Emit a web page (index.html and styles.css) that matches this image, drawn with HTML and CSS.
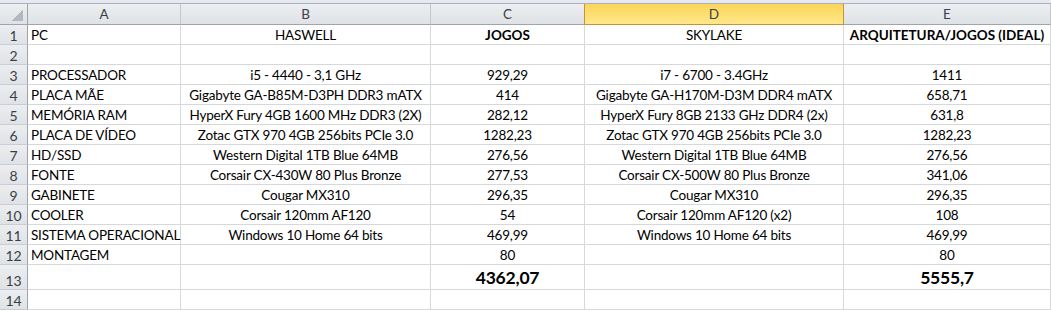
FILE: index.html
```html
<!DOCTYPE html>
<html lang="pt">
<head>
<meta charset="utf-8">
<title>Planilha</title>
<link rel="stylesheet" href="styles.css">
</head>
<body>
<div class="topstrip"></div>
<div class="sheet">
  <div class="hd corner"><span class="tri"></span></div>
  <div class="hd col">A</div>
  <div class="hd col">B</div>
  <div class="hd col">C</div>
  <div class="hd col sel">D</div>
  <div class="hd col">E</div>

  <div class="hd rn">1</div><div class="c l">PC</div><div class="c">HASWELL</div><div class="c b">JOGOS</div><div class="c">SKYLAKE</div><div class="c b">ARQUITETURA/JOGOS (IDEAL)</div>
  <div class="hd rn">2</div><div class="c l"></div><div class="c"></div><div class="c"></div><div class="c"></div><div class="c"></div>
  <div class="hd rn">3</div><div class="c l">PROCESSADOR</div><div class="c">i5 - 4440 - 3,1 GHz</div><div class="c">929,29</div><div class="c">i7 - 6700 - 3.4GHz</div><div class="c">1411</div>
  <div class="hd rn">4</div><div class="c l">PLACA MÃE</div><div class="c">Gigabyte GA-B85M-D3PH DDR3 mATX</div><div class="c">414</div><div class="c">Gigabyte GA-H170M-D3M DDR4 mATX</div><div class="c">658,71</div>
  <div class="hd rn">5</div><div class="c l">MEMÓRIA RAM</div><div class="c">HyperX Fury 4GB 1600 MHz DDR3 (2X)</div><div class="c">282,12</div><div class="c">HyperX Fury 8GB 2133 GHz DDR4 (2x)</div><div class="c">631,8</div>
  <div class="hd rn">6</div><div class="c l">PLACA DE VÍDEO</div><div class="c">Zotac GTX 970 4GB 256bits PCIe 3.0</div><div class="c">1282,23</div><div class="c">Zotac GTX 970 4GB 256bits PCIe 3.0</div><div class="c">1282,23</div>
  <div class="hd rn">7</div><div class="c l">HD/SSD</div><div class="c">Western Digital 1TB Blue 64MB</div><div class="c">276,56</div><div class="c">Western Digital 1TB Blue 64MB</div><div class="c">276,56</div>
  <div class="hd rn">8</div><div class="c l">FONTE</div><div class="c">Corsair CX-430W 80 Plus Bronze</div><div class="c">277,53</div><div class="c">Corsair CX-500W 80 Plus Bronze</div><div class="c">341,06</div>
  <div class="hd rn">9</div><div class="c l">GABINETE</div><div class="c">Cougar MX310</div><div class="c">296,35</div><div class="c">Cougar MX310</div><div class="c">296,35</div>
  <div class="hd rn">10</div><div class="c l">COOLER</div><div class="c">Corsair 120mm AF120</div><div class="c">54</div><div class="c">Corsair 120mm AF120 (x2)</div><div class="c">108</div>
  <div class="hd rn">11</div><div class="c l">SISTEMA OPERACIONAL</div><div class="c">Windows 10 Home 64 bits</div><div class="c">469,99</div><div class="c">Windows 10 Home 64 bits</div><div class="c">469,99</div>
  <div class="hd rn">12</div><div class="c l">MONTAGEM</div><div class="c"></div><div class="c">80</div><div class="c"></div><div class="c">80</div>
  <div class="hd rn">13</div><div class="c l"></div><div class="c"></div><div class="c big">4362,07</div><div class="c"></div><div class="c big">5555,7</div>
  <div class="hd rn">14</div><div class="c l"></div><div class="c"></div><div class="c"></div><div class="c"></div><div class="c"></div>
</div>
</body>
</html>
```

FILE: styles.css
```css
html, body {
  margin: 0;
  padding: 0;
  background: #ffffff;
  overflow: hidden;
}

body {
  font-family: Lato, "Open Sans", "Liberation Sans", sans-serif;
  font-size: 13.5px;
  letter-spacing: -0.2px;
  color: #000;
}

.topstrip {
  height: 3px;
  background: #e6e9ef;
  border-bottom: 1px solid #a9b0b9;
}

.sheet {
  display: grid;
  grid-template-columns: 28px 153px 250px 154px 259px 1fr;
  grid-template-rows: 21px repeat(12, 20px) 25px 20px;
}

.c {
  box-sizing: border-box;
  border-right: 1px solid #d6d8dc;
  border-bottom: 1px solid #d6d8dc;
  display: flex;
  align-items: flex-end;
  justify-content: center;
  padding: 0 2px 0;
  white-space: nowrap;
  overflow: visible;
  line-height: 17px;
}

.c.l {
  justify-content: flex-start;
  padding-left: 3px;
}

.c.b {
  font-weight: 700;
  letter-spacing: 0;
}

.c.big {
  font-weight: 700;
  font-size: 17.5px;
  line-height: 22px;
}

.hd {
  box-sizing: border-box;
  background: linear-gradient(#eceef1, #dfe2e6);
  color: #3a3f47;
  display: flex;
  align-items: flex-end;
  justify-content: center;
  line-height: 17px;
  padding-bottom: 1px;
  letter-spacing: 0;
}

.col {
  border-right: 1px solid #c4c8ce;
  border-bottom: 1px solid #9fa4ab;
}

.col.sel {
  background: linear-gradient(#fbd55a, #ffe88a);
  border-right: 1px solid #c9923a;
  border-bottom: 1px solid #c9923a;
  box-shadow: -1px 0 0 #c9923a;
}

.corner {
  border-right: 1px solid #9fa4ab;
  border-bottom: 1px solid #9fa4ab;
  position: relative;
}

.tri {
  position: absolute;
  right: 4px;
  bottom: 3px;
  width: 11px;
  height: 11px;
  background: linear-gradient(135deg, transparent 50%, #b4b8be 50%);
}

.rn {
  border-right: 1px solid #9fa4ab;
  border-bottom: 1px solid #c9cdd3;
  font-size: 14px;
  padding-bottom: 0;
}
```
